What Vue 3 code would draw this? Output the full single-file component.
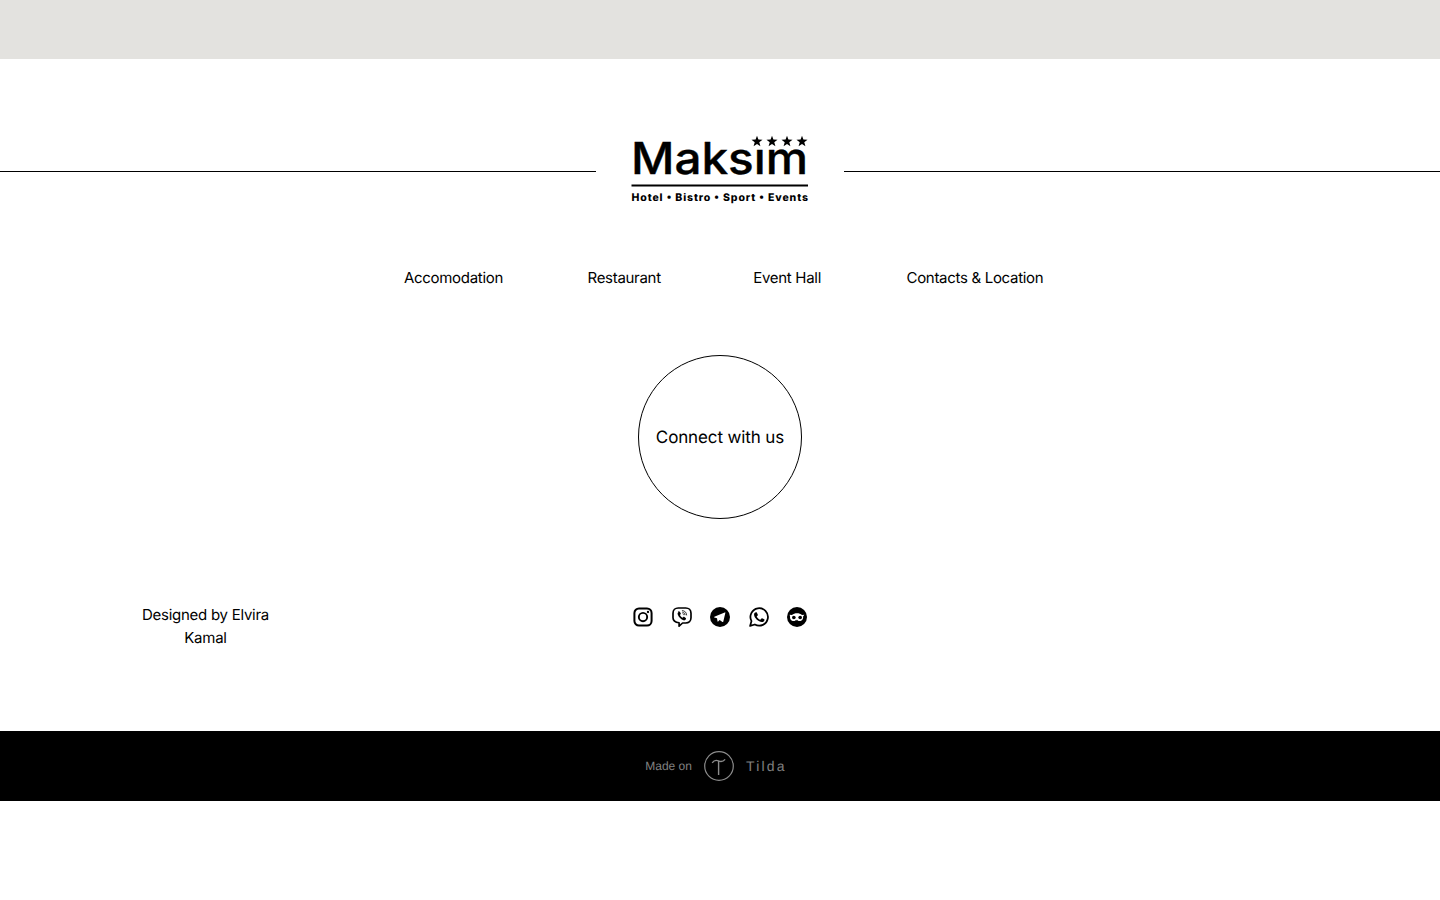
<template>
  <div class="page">
    <div class="top-bar"></div>

    <header class="brand">
      <span class="brand-line"></span>
      <div class="logo">
        <svg width="180" height="88" viewBox="0 -8 180 88">
          <text x="1" y="38.500" class="logo-name" textLength="177" lengthAdjust="spacingAndGlyphs">Maksim</text>
          <!-- the first star stands in for the dot of the i -->
          <rect x="120" y="-4" width="14" height="17.500" fill="#fff" />
          <g fill="#000">
            <polygon v-for="x in starsX" :key="x" :points="starPoints(x, 6.5)" />
          </g>
          <rect x="1.500" y="49.500" width="176.500" height="2" fill="#000" />
          <text x="1.500" y="66" class="logo-tag" textLength="176.500" lengthAdjust="spacing">Hotel • Bistro • Sport • Events</text>
        </svg>
      </div>
      <span class="brand-line"></span>
    </header>

    <nav class="menu">
      <a v-for="item in menu" :key="item.label" :class="item.cls">{{ item.label }}</a>
    </nav>

    <div class="connect-wrap">
      <div class="connect">Connect with us</div>
    </div>

    <section class="info">
      <div class="credit">Designed by Elvira Kamal</div>
      <div class="socials">
        <svg viewBox="0 0 24 24" class="icon">
          <rect x="1.700" y="1.700" width="20.600" height="20.600" rx="5.500" fill="none" stroke="#000" stroke-width="2.400" />
          <circle cx="12" cy="12" r="5" fill="none" stroke="#000" stroke-width="2.300" />
          <circle cx="18" cy="6" r="1.400" fill="#000" />
        </svg>
        <svg viewBox="0 0 24 24" class="icon">
          <path d="M7.500 1.200h9c3.600 0 6.300 2.600 6.300 6.200v5.600c0 3.600-2.700 6.200-6.300 6.200h-3.800l-4.200 3.800v-4.100C4.500 18.500 1.200 16.500 1.200 13V7.400c0-3.600 2.700-6.200 6.300-6.200z" fill="none" stroke="#000" stroke-width="2" stroke-linejoin="round" />
          <path d="M7.300 5.500c.7-.5 1.400-.4 1.800.1l1.300 1.700c.4.600.2 1.200-.2 1.600l-.7.500c.5 1.600 1.600 2.800 3.200 3.500l.6-.7c.4-.5 1.100-.6 1.600-.2l1.600 1.300c.5.400.5 1.200 0 1.800-.7.900-1.700 1.200-2.800.8-3.500-1.400-5.800-3.800-6.900-7.100-.3-1.200.2-2.200 1-2.900z" fill="#000" />
          <path d="M12.400 4.300c3 .1 5.100 2.200 5.200 5.300M12.700 6.200c1.800.1 2.900 1.200 3 3.100M13.100 8c.8 0 1.200.5 1.200 1.300" fill="none" stroke="#000" stroke-width=".9" stroke-linecap="round" />
        </svg>
        <svg viewBox="0 0 24 24" class="icon">
          <circle cx="12" cy="12" r="12" fill="#000" />
          <path d="M18.600 6.300 15.900 17.600c-.1.500-.6.600-1 .4l-3.300-2.400-1.800 1.800c-.3.300-.7.200-.8-.2l-.6-3.700-3.200-1c-.5-.2-.5-.7 0-.9l12.400-5c.5-.2 1.100.1 1 .6z" fill="#fff" />
        </svg>
        <svg viewBox="0 0 24 24" class="icon">
          <path d="M1.300 22.700l1.700-5.800A10.500 10.500 0 1 1 7 21z" fill="none" stroke="#000" stroke-width="2.100" stroke-linejoin="round" />
          <path d="M8.600 6.300c.4 0 .7 0 .9.500l1.100 2.500c.1.300 0 .6-.2.800l-.9 1.100c-.2.200-.2.400 0 .7.800 1.400 2.100 2.600 3.700 3.300.3.100.5.100.7-.1l1.100-1.300c.2-.3.500-.3.800-.2l2.400 1.200c.4.200.5.400.4.800-.2 1.600-1.600 2.500-3.200 2.500-4-.2-8.800-4.500-9.300-8.400-.2-1.500.6-3.400 2.500-3.400z" fill="#000" />
        </svg>
        <svg viewBox="0 0 24 24" class="icon">
          <circle cx="12" cy="12" r="12" fill="#000" />
          <path d="M3.200 9.300 6 9.500C7.500 8.100 9.700 7.500 12 7.500s4.500.6 6 2l2.800-.2-1.500 2c.5 2.700-1.400 5.600-4.300 5.600-1.300 0-2.300-.6-3-1.500l-.5 1-.5-1c-.7.900-1.700 1.500-3 1.500-2.900 0-4.800-2.900-4.300-5.600z" fill="#fff" />
          <circle cx="8.200" cy="12.600" r="2.200" fill="#000" />
          <circle cx="15.800" cy="12.600" r="2.200" fill="#000" />
        </svg>
      </div>
    </section>

    <footer class="made-on">
      <span class="made-text">Made on</span>
      <svg viewBox="0 0 30 30" class="tilda-mark">
        <circle cx="15" cy="15" r="14.300" fill="none" stroke="#8c8c8c" stroke-width="1.200" />
        <path d="M8.200 11.800c1.900-2.700 3.900-3 6.300-1.900 2.400 1.100 4.400 1 6.600-1.500M14.600 10.200V24" fill="none" stroke="#8c8c8c" stroke-width="1.400" />
      </svg>
      <span class="tilda-name">Tilda</span>
    </footer>
  </div>
</template>

<script setup>
const menu = [
  { label: 'Accomodation', cls: 'm-first' },
  { label: 'Restaurant', cls: 'm-second' },
  { label: 'Event Hall', cls: 'm-third' },
  { label: 'Contacts & Location', cls: 'm-fourth' },
];

const starsX = [127, 142, 157, 172];

// five-pointed star around (cx, cy)
function starPoints(cx, cy) {
  const pts = [];
  for (let i = 0; i < 10; i++) {
    const r = i % 2 === 0 ? 5.8 : 2.4;
    const a = (Math.PI / 5) * i - Math.PI / 2;
    pts.push(`${(cx + r * Math.cos(a)).toFixed(2)},${(cy + r * Math.sin(a)).toFixed(2)}`);
  }
  return pts.join(' ');
}
</script>

<style>
html,
body {
  background: #fff;
}
</style>

<style scoped>
.page {
  font-family: Inter, "Liberation Sans", sans-serif;
  color: #000;
  text-rendering: geometricPrecision;
}

.top-bar {
  height: 59px;
  background: #e3e2df;
}

.brand {
  display: flex;
  align-items: center;
  margin-top: 76px;
  height: 72px;
}

.brand-line {
  flex: 1;
  height: 1px;
  background: #000;
}

.logo {
  width: 248px;
  height: 72px;
  display: flex;
  align-items: center;
  justify-content: center;
}

.logo-name {
  font-family: Inter, sans-serif;
  font-size: 44px;
  font-weight: 500;
  stroke: #000;
  stroke-width: 0.4px;
}

.logo-tag {
  font-family: Inter, sans-serif;
  font-size: 10.500px;
  font-weight: 800;
}

.menu {
  display: flex;
  margin-top: 59px;
  padding-left: 404px;
  font-size: 15px;
  letter-spacing: -0.3px;
  line-height: 23px;
}

.m-second {
  margin-left: 84.500px;
}

.m-third {
  margin-left: 92.500px;
}

.m-fourth {
  margin-left: 85.500px;
}

.connect-wrap {
  display: flex;
  justify-content: center;
  margin-top: 66px;
}

.connect {
  width: 164px;
  height: 164px;
  box-sizing: border-box;
  padding-top: 2px;
  border: 1px solid #000;
  border-radius: 50%;
  display: flex;
  align-items: center;
  justify-content: center;
  font-size: 17px;
  letter-spacing: -0.12px;
}

.info {
  position: relative;
  display: flex;
  justify-content: center;
  margin-top: 85px;
  height: 127px;
}

.credit {
  position: absolute;
  left: 130px;
  top: -1px;
  width: 151px;
  text-align: center;
  font-size: 15px;
  letter-spacing: -0.27px;
  line-height: 23px;
}

.socials {
  display: flex;
  gap: 18.500px;
  height: 20px;
  margin-top: 3px;
}

.icon {
  width: 20px;
  height: 20px;
}

.made-on {
  height: 70px;
  background: #000;
  display: flex;
  align-items: center;
  justify-content: center;
  padding-right: 8px;
  margin-bottom: 99px;
}

.made-text {
  font-family: "Liberation Sans", sans-serif;
  font-size: 12px;
  color: #808080;
}

.tilda-mark {
  width: 30px;
  height: 30px;
  margin-left: 12px;
}

.tilda-name {
  font-family: "Liberation Sans", sans-serif;
  font-size: 14px;
  letter-spacing: 2.200px;
  color: #808080;
  margin-left: 12px;
}
</style>
